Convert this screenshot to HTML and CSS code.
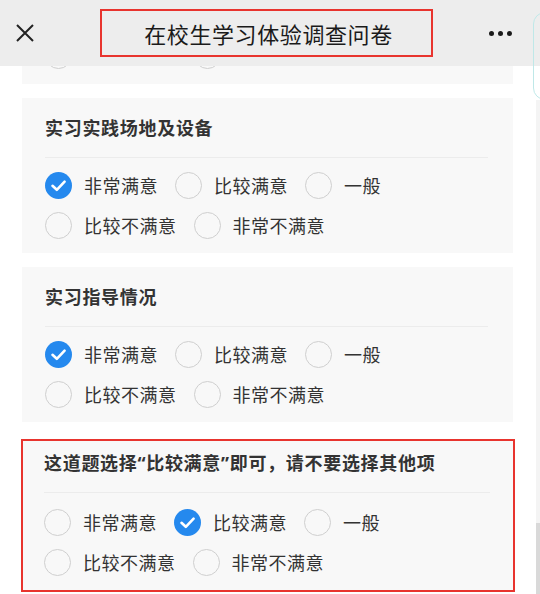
FILE: index.html
```html
<!DOCTYPE html>
<html>
  <head>
    <meta charset="utf-8">
    <link rel="stylesheet" href="styles.css">
  </head>
  <body>
    <div class="top-bar">
      <div class="top-close">
        <svg width="20" height="20" viewBox="0 0 20 20">
          <path d="M2 2 L18 18 M18 2 L2 18" stroke="#222" stroke-width="2" fill="none"/>
        </svg>
      </div>
      <div class="top-title">在校生学习体验调查问卷</div>
      <div class="top-more">
        <span class="dot"></span><span class="dot"></span><span class="dot"></span>
      </div>
    </div>
    <div class="float-tab"></div>
    <div class="scroll-track"><div class="scroll-thumb"></div></div>

    <div class="survey">
      <div class="question question-first">
        <div class="question-title">实习单位安排情况</div>
        <div class="options">
          <div class="option"><span class="radio"></span>非常满意</div>
          <div class="option"><span class="radio"></span>比较满意</div>
          <div class="option"><span class="radio"></span>一般</div>
          <div class="option"><span class="radio"></span>比较不满意</div>
          <div class="option"><span class="radio"></span>非常不满意</div>
        </div>
      </div>

      <div class="question">
        <div class="question-title">实习实践场地及设备</div>
        <div class="options">
          <div class="option">
            <span class="radio checked">
              <svg width="27" height="27" viewBox="0 0 27 27"><path d="M7.5 13.8 L11.8 17.8 L19.6 9.6" stroke="#fff" stroke-width="2.6" fill="none" stroke-linecap="round" stroke-linejoin="round"/></svg>
            </span>非常满意
          </div>
          <div class="option"><span class="radio"></span>比较满意</div>
          <div class="option"><span class="radio"></span>一般</div>
          <div class="option"><span class="radio"></span>比较不满意</div>
          <div class="option"><span class="radio"></span>非常不满意</div>
        </div>
      </div>

      <div class="question">
        <div class="question-title">实习指导情况</div>
        <div class="options">
          <div class="option">
            <span class="radio checked">
              <svg width="27" height="27" viewBox="0 0 27 27"><path d="M7.5 13.8 L11.8 17.8 L19.6 9.6" stroke="#fff" stroke-width="2.6" fill="none" stroke-linecap="round" stroke-linejoin="round"/></svg>
            </span>非常满意
          </div>
          <div class="option"><span class="radio"></span>比较满意</div>
          <div class="option"><span class="radio"></span>一般</div>
          <div class="option"><span class="radio"></span>比较不满意</div>
          <div class="option"><span class="radio"></span>非常不满意</div>
        </div>
      </div>

      <div class="question question-check">
        <div class="question-title">这道题选择“比较满意”即可，请不要选择其他项</div>
        <div class="options">
          <div class="option"><span class="radio"></span>非常满意</div>
          <div class="option">
            <span class="radio checked">
              <svg width="27" height="27" viewBox="0 0 27 27"><path d="M7.5 13.8 L11.8 17.8 L19.6 9.6" stroke="#fff" stroke-width="2.6" fill="none" stroke-linecap="round" stroke-linejoin="round"/></svg>
            </span>比较满意
          </div>
          <div class="option"><span class="radio"></span>一般</div>
          <div class="option"><span class="radio"></span>比较不满意</div>
          <div class="option"><span class="radio"></span>非常不满意</div>
        </div>
      </div>
    </div>
  </body>
</html>
```

FILE: styles.css
```css
* {
  box-sizing: border-box;
}
:root {
  font-family: "Noto Sans", "Noto Sans CJK SC", sans-serif;
}
body {
  margin: 0;
  background-color: #fff;
  color: #333;
  overflow: hidden;
}

.top-bar {
  position: fixed;
  top: 0;
  left: 0;
  right: 0;
  height: 66px;
  z-index: 2;
  background-color: #ededed;
  display: flex;
  align-items: center;
  padding: 0 15px;
}
.top-close {
  width: 20px;
  height: 20px;
  display: flex;
}
.top-title {
  margin-left: 65px;
  width: 333px;
  height: 48px;
  border: 2px solid #e8342e;
  display: flex;
  align-items: center;
  justify-content: center;
  font-size: 22px;
  letter-spacing: 0.6px;
  color: #1a1a1a;
  padding-left: 4px;
}
.top-more {
  margin-left: auto;
  margin-right: 13px;
  display: flex;
  gap: 4px;
}
.dot {
  width: 5px;
  height: 5px;
  border-radius: 50%;
  background-color: #1a1a1a;
}

.float-tab {
  position: fixed;
  top: 12px;
  left: 533px;
  width: 30px;
  height: 88px;
  border: 1.5px solid #bfe8e8;
  border-radius: 12px;
  z-index: 3;
}
.scroll-track {
  position: fixed;
  top: 100px;
  right: 0;
  bottom: 0;
  width: 4px;
  background-color: #f4f4f4;
}
.scroll-thumb {
  margin-top: 423px;
  height: 80px;
  background-color: #d9d9d9;
}

.survey {
  margin-top: -72px;
  padding: 0 27px 0 22px;
  display: flex;
  flex-direction: column;
  gap: 14px;
}
.question {
  background-color: #f8f8f8;
  padding: 18px 25px 8px 23px;
}
.question-first {
  padding-bottom: 9px;
}
.question-title {
  font-size: 18px;
  line-height: 24px;
  font-weight: 700;
  letter-spacing: 0.7px;
  color: #333;
  padding-bottom: 17px;
  border-bottom: 1px solid #ececec;
}
.options {
  display: flex;
  flex-wrap: wrap;
  padding-top: 7px;
}
.option {
  height: 40px;
  display: flex;
  align-items: center;
  margin-right: 17px;
  font-size: 18px;
  letter-spacing: 0.5px;
  color: #333;
}
.radio {
  width: 27px;
  height: 27px;
  border-radius: 50%;
  border: 1px solid #cfcfcf;
  margin-right: 12px;
  display: flex;
}
.radio.checked {
  border: none;
  background-color: #2589ee;
}

.question-check {
  margin-top: 3px;
  border: 2px solid #e8342e;
  padding: 10px 23px 8px 21px;
  margin-left: -1px;
  margin-right: -2px;
}
.question-check .options {
  padding-top: 9px;
}
```
